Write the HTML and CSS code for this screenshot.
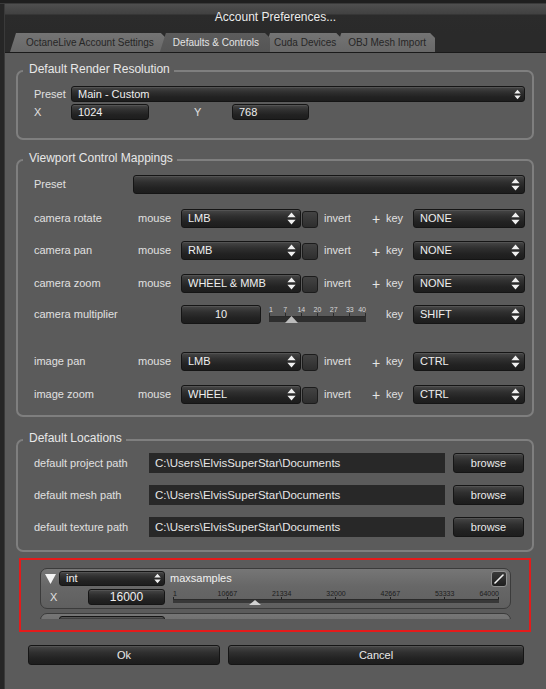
FILE: index.html
```html
<!DOCTYPE html>
<html>
<head>
<meta charset="utf-8">
<title>Account Preferences</title>
<link rel="stylesheet" href="styles.css">
</head>
<body>
<div class="screen">
  <div class="topstrip"></div>
  <div class="dialog">
    <div class="titlebar"><span class="title">Account Preferences...</span></div>
    <div class="tabbar">
      <div class="tab t1">OctaneLive Account Settings</div>
      <div class="tab t2 active">Defaults &amp; Controls</div>
      <div class="tab t3">Cuda Devices</div>
      <div class="tab t4">OBJ Mesh Import</div>
    </div>
    <div class="panel">
      <fieldset class="group g1">
        <legend>Default Render Resolution</legend>
        <div class="res-row">
          <span class="lbl res-lbl">Preset</span>
          <div class="combo combo-sm res-combo"><span class="ctext">Main - Custom</span><svg class="arr-sm" width="7" height="11" viewBox="0 0 9 13"><path d="M4.5 0.5L8.6 5.3H0.4Z M0.4 7.7H8.6L4.5 12.5Z" fill="#f0f0f0"/></svg></div>
        </div>
        <div class="res-row">
          <span class="lbl res-lbl">X</span>
          <div class="field field-sm res-x">1024</div>
          <span class="lbl res-ylbl">Y</span>
          <div class="field field-sm res-y">768</div>
        </div>
      </fieldset>

      <fieldset class="group g2">
        <legend>Viewport Control Mappings</legend>
        <div class="vrows">
          <div class="vrow vpreset">
            <span class="lbl">Preset</span>
            <div class="combo"><span class="ctext"></span><svg width="9" height="13" viewBox="0 0 9 13"><path d="M4.5 0.5L8.6 5.3H0.4Z M0.4 7.7H8.6L4.5 12.5Z" fill="#f0f0f0"/></svg></div>
          </div>
          <div class="vrow vstd">
            <span class="lbl">camera rotate</span><span class="lbl">mouse</span>
            <div class="combo"><span class="ctext">LMB</span><svg width="9" height="13" viewBox="0 0 9 13"><path d="M4.5 0.5L8.6 5.3H0.4Z M0.4 7.7H8.6L4.5 12.5Z" fill="#f0f0f0"/></svg></div>
            <div class="chkcell"><span class="chk"></span></div>
            <span class="lbl inv">invert</span><span class="plus">+</span><span class="lbl">key</span>
            <div class="combo"><span class="ctext">NONE</span><svg width="9" height="13" viewBox="0 0 9 13"><path d="M4.5 0.5L8.6 5.3H0.4Z M0.4 7.7H8.6L4.5 12.5Z" fill="#f0f0f0"/></svg></div>
          </div>
          <div class="vrow vstd">
            <span class="lbl">camera pan</span><span class="lbl">mouse</span>
            <div class="combo"><span class="ctext">RMB</span><svg width="9" height="13" viewBox="0 0 9 13"><path d="M4.5 0.5L8.6 5.3H0.4Z M0.4 7.7H8.6L4.5 12.5Z" fill="#f0f0f0"/></svg></div>
            <div class="chkcell"><span class="chk"></span></div>
            <span class="lbl inv">invert</span><span class="plus">+</span><span class="lbl">key</span>
            <div class="combo"><span class="ctext">NONE</span><svg width="9" height="13" viewBox="0 0 9 13"><path d="M4.5 0.5L8.6 5.3H0.4Z M0.4 7.7H8.6L4.5 12.5Z" fill="#f0f0f0"/></svg></div>
          </div>
          <div class="vrow vstd">
            <span class="lbl">camera zoom</span><span class="lbl">mouse</span>
            <div class="combo"><span class="ctext">WHEEL &amp; MMB</span><svg width="9" height="13" viewBox="0 0 9 13"><path d="M4.5 0.5L8.6 5.3H0.4Z M0.4 7.7H8.6L4.5 12.5Z" fill="#f0f0f0"/></svg></div>
            <div class="chkcell"><span class="chk"></span></div>
            <span class="lbl inv">invert</span><span class="plus">+</span><span class="lbl">key</span>
            <div class="combo"><span class="ctext">NONE</span><svg width="9" height="13" viewBox="0 0 9 13"><path d="M4.5 0.5L8.6 5.3H0.4Z M0.4 7.7H8.6L4.5 12.5Z" fill="#f0f0f0"/></svg></div>
          </div>
          <div class="vrow vmult">
            <span class="lbl">camera multiplier</span>
            <div class="field center">10</div>
            <span></span>
            <div class="slider sl-cam">
              <div class="sl-labels"><span>1</span><span>7</span><span>14</span><span>20</span><span>27</span><span>33</span><span>40</span></div>
              <div class="sl-ticks"><i></i><i></i><i></i><i></i><i></i><i></i><i></i></div>
              <div class="sl-track"><svg class="thumb" style="left:23%" width="13" height="7" viewBox="0 0 13 7"><path d="M6.5 0L13 7H0Z" fill="#bcbcbc"/></svg></div>
            </div>
            <span></span>
            <span class="lbl">key</span>
            <div class="combo"><span class="ctext">SHIFT</span><svg width="9" height="13" viewBox="0 0 9 13"><path d="M4.5 0.5L8.6 5.3H0.4Z M0.4 7.7H8.6L4.5 12.5Z" fill="#f0f0f0"/></svg></div>
          </div>
          <div class="vrow vstd spaced">
            <span class="lbl">image pan</span><span class="lbl">mouse</span>
            <div class="combo"><span class="ctext">LMB</span><svg width="9" height="13" viewBox="0 0 9 13"><path d="M4.5 0.5L8.6 5.3H0.4Z M0.4 7.7H8.6L4.5 12.5Z" fill="#f0f0f0"/></svg></div>
            <div class="chkcell"><span class="chk"></span></div>
            <span class="lbl inv">invert</span><span class="plus">+</span><span class="lbl">key</span>
            <div class="combo"><span class="ctext">CTRL</span><svg width="9" height="13" viewBox="0 0 9 13"><path d="M4.5 0.5L8.6 5.3H0.4Z M0.4 7.7H8.6L4.5 12.5Z" fill="#f0f0f0"/></svg></div>
          </div>
          <div class="vrow vstd">
            <span class="lbl">image zoom</span><span class="lbl">mouse</span>
            <div class="combo"><span class="ctext">WHEEL</span><svg width="9" height="13" viewBox="0 0 9 13"><path d="M4.5 0.5L8.6 5.3H0.4Z M0.4 7.7H8.6L4.5 12.5Z" fill="#f0f0f0"/></svg></div>
            <div class="chkcell"><span class="chk"></span></div>
            <span class="lbl inv">invert</span><span class="plus">+</span><span class="lbl">key</span>
            <div class="combo"><span class="ctext">CTRL</span><svg width="9" height="13" viewBox="0 0 9 13"><path d="M4.5 0.5L8.6 5.3H0.4Z M0.4 7.7H8.6L4.5 12.5Z" fill="#f0f0f0"/></svg></div>
          </div>
        </div>
      </fieldset>

      <fieldset class="group g3">
        <legend>Default Locations</legend>
        <div class="locs">
          <div class="lrow"><span class="lbl loc-lbl">default project path</span><div class="path">C:\Users\ElvisSuperStar\Documents</div><div class="btn browse">browse</div></div>
          <div class="lrow"><span class="lbl loc-lbl">default mesh path</span><div class="path">C:\Users\ElvisSuperStar\Documents</div><div class="btn browse">browse</div></div>
          <div class="lrow"><span class="lbl loc-lbl">default texture path</span><div class="path">C:\Users\ElvisSuperStar\Documents</div><div class="btn browse">browse</div></div>
        </div>
      </fieldset>

      <div class="redbox">
        <div class="nodes">
          <div class="node">
            <div class="nrow">
              <svg class="collapse" width="11" height="10" viewBox="0 0 11 10"><path d="M0 0H11L5.5 10Z" fill="#f4f4f4"/></svg>
              <div class="combo combo-sm ncombo"><span class="ctext">int</span><svg width="7" height="11" viewBox="0 0 9 13"><path d="M4.5 0.5L8.6 5.3H0.4Z M0.4 7.7H8.6L4.5 12.5Z" fill="#f0f0f0"/></svg></div>
              <span class="lbl nname">maxsamples</span>
              <div class="editbtn"><svg width="10" height="10" viewBox="0 0 10 10"><path d="M1 9L9 1" stroke="#f4f4f4" stroke-width="1.6" stroke-linecap="round"/></svg></div>
            </div>
            <div class="nrow nrow2">
              <span class="lbl nx">X</span>
              <div class="field field-sm nfield center">16000</div>
              <div class="slider sl-node">
                <div class="sl-labels"><span>1</span><span>10667</span><span>21334</span><span>32000</span><span>42667</span><span>53333</span><span>64000</span></div>
                <div class="sl-ticks"><i></i><i></i><i></i><i></i><i></i><i></i><i></i></div>
                <div class="sl-track"><svg class="thumb" style="left:25%" width="12" height="5" viewBox="0 0 12 5"><path d="M6 0L12 5H0Z" fill="#d2d2d2"/></svg></div>
              </div>
            </div>
          </div>
          <div class="node">
            <div class="nrow">
              <svg class="collapse" width="11" height="10" viewBox="0 0 11 10"><path d="M0 0H11L5.5 10Z" fill="#f4f4f4"/></svg>
              <div class="combo combo-sm ncombo"><span class="ctext"></span></div>
            </div>
          </div>
        </div>
      </div>

      <div class="actions">
        <div class="btn ok">Ok</div>
        <div class="btn cancel">Cancel</div>
      </div>
    </div>
  </div>
</div>
</body>
</html>
```
FILE: styles.css
```css
* { box-sizing: border-box; }
html, body { margin: 0; padding: 0; }
body {
  width: 546px;
  height: 689px;
  overflow: hidden;
  background: #262626;
  font-family: "Liberation Sans", Arial, sans-serif;
  font-size: 11px;
  color: #e2e2e2;
}
.screen { display: flex; flex-direction: column; height: 689px; }
.topstrip { height: 4px; flex: none; background: #1f1f1f; border-bottom: 1px solid #3a3a3a; }
.dialog {
  flex: 1;
  min-height: 0;
  margin-left: 4px;
  border-left: 1px solid #3a3a3a;
  display: flex;
  flex-direction: column;
}
.titlebar {
  height: 29px;
  flex: none;
  text-align: center;
  padding-top: 6px;
  background: linear-gradient(#4f4f4f 0, #414141 10px, #2b2b2b 11px, #2a2a2a 100%);
}
.title { font-size: 12px; line-height: 14px; color: #ececec; }

.tabbar {
  height: 20px;
  flex: none;
  display: flex;
  padding-left: 5px;
  background: #2a2a2a;
  border-bottom: 1px solid #1a1a1a;
}
.tab {
  height: 19px;
  font-size: 10px;
  line-height: 20px;
  white-space: nowrap;
  margin-left: -6px;
  color: #262626;
  background: linear-gradient(#747474, #686868);
  clip-path: polygon(6px 0, calc(100% - 5px) 0, 100% 5px, 100% 100%, 0 100%);
}
.tab.t1 { margin-left: 0; padding: 0 12px 0 16px; }
.tab.t2 { padding: 0 11px 0 13px; }
.tab.t3 { padding: 0 5px 0 10px; }
.tab.t4 { padding: 0 9px 0 13px; }
.tab.active {
  position: relative;
  z-index: 1;
  color: #e4e4e4;
  background: linear-gradient(#5c5c5c, #555555);
}

.panel {
  flex: 1;
  min-height: 0;
  background: #5b5b5b;
  padding-top: 8.5px;
  display: flex;
  flex-direction: column;
}
.panel > * { flex: none; }

.group {
  margin: 0 12px 0 11px;
  border: 2px solid #7f7f7f;
  border-radius: 7px;
  min-width: 0;
}
.group legend {
  font-size: 12px;
  line-height: 14px;
  color: #e8e8e8;
  padding: 0 4px 5px 6px;
  margin-left: -11px;
}
.lbl { line-height: 19px; white-space: nowrap; color: #e0e0e0; }

.g1 { padding: 5.5px 7px 18px 16px; }
.g2 { margin-top: 10.5px; padding: 5px 7px 13px 16px; }
.g3 { margin-top: 13.5px; padding: 3.5px 7px 13px 16px; }

.res-row { display: flex; align-items: center; height: 16px; }
.res-row + .res-row { margin-top: 2px; }
.res-row .combo-sm, .res-row .field-sm { height: 16px; line-height: 14px; }
.res-lbl { width: 37px; line-height: 16px; }
.res-combo { flex: 1; }
.res-combo .ctext { line-height: 14px; }
.res-x { width: 78px; }
.res-ylbl { width: 83px; padding-left: 45px; line-height: 16px; }
.res-y { width: 77px; }

.combo {
  height: 19px;
  display: flex;
  align-items: center;
  padding: 0 4px 0 6px;
  border: 1px solid #151515;
  border-radius: 3px;
  color: #efefef;
  background: linear-gradient(#474747 0, #303030 35%, #222222 70%, #1d1d1d 100%);
  box-shadow: inset 0 1px 0 rgba(255,255,255,0.08);
  min-width: 0;
}
.combo-sm { height: 15px; padding-right: 3px; }
.ctext { flex: 1; white-space: nowrap; overflow: hidden; line-height: 17px; }
.combo-sm .ctext { line-height: 13px; }
.combo svg { flex: none; }

.field {
  height: 19px;
  line-height: 17px;
  padding-left: 6px;
  border: 1px solid #151515;
  border-radius: 3px;
  color: #efefef;
  background: linear-gradient(#474747 0, #303030 35%, #222222 70%, #1d1d1d 100%);
  box-shadow: inset 0 1px 0 rgba(255,255,255,0.08);
}
.field-sm { height: 15px; line-height: 13px; }
.field.center { text-align: center; padding-left: 0; }

.vrows { display: flex; flex-direction: column; gap: 13.5px; }
.vrow { height: 19px; display: grid; align-items: center; }
.vrow.spaced { margin-top: 13.5px; }
.vpreset { grid-template-columns: 99px 392px; }
.vstd { grid-template-columns: 104px 43px 120px 17px 54px 14px 27px 112px; }
.vmult { grid-template-columns: 147px 80px 8px 97px 20px 27px 112px; }
.chkcell { height: 19px; display: flex; align-items: flex-end; }
.chk {
  width: 16px;
  height: 17px;
  margin-left: 1px;
  border: 1px solid #1c1c1c;
  border-radius: 3px;
  background: linear-gradient(#434343, #2e2e2e);
}
.inv { padding-left: 6px; }
.plus { font-size: 14px; line-height: 19px; padding-top: 3px; color: #e6e6e6; }

.slider { display: flex; flex-direction: column; }
.sl-labels { display: flex; justify-content: space-between; height: 7px; font-size: 7px; line-height: 7px; }
.sl-labels span { width: 0; display: flex; justify-content: center; white-space: nowrap; }
.sl-labels span:first-child { justify-content: flex-start; }
.sl-labels span:last-child { justify-content: flex-end; }
.sl-ticks { display: flex; justify-content: space-between; height: 3px; }
.sl-ticks i { width: 1px; background: #2a2a2a; }
.sl-track { position: relative; }
.thumb { position: absolute; top: -1px; }
.sl-cam { height: 16px; color: #d6d6d6; }
.sl-cam .sl-track { height: 6px; border-top: 1px solid #2a2a2a; background: #2e2e2e; }
.sl-cam .thumb { margin-left: -6.5px; }

.locs { display: flex; flex-direction: column; gap: 12px; }
.lrow { display: flex; align-items: center; height: 20px; }
.loc-lbl { width: 115px; line-height: 20px; }
.path {
  width: 296px;
  height: 20px;
  line-height: 20px;
  padding-left: 6px;
  background: #282828;
  font-size: 11.5px;
  color: #e6e6e6;
  white-space: nowrap;
}
.btn {
  height: 20px;
  line-height: 18px;
  text-align: center;
  border: 1px solid #151515;
  border-radius: 3px;
  color: #eaeaea;
  background: linear-gradient(#474747 0, #303030 35%, #222222 70%, #1d1d1d 100%);
  box-shadow: inset 0 1px 0 rgba(255,255,255,0.08);
}
.browse { width: 71px; margin-left: 8px; }

.redbox {
  margin: 6px 15px 0 14px;
  height: 74px;
  border: 2px solid #e41b1b;
  padding: 8px 18px 0 19px;
}
.nodes { height: 51px; overflow: hidden; display: flex; flex-direction: column; gap: 4px; }
.node {
  height: 41px;
  flex: none;
  border: 1px solid #3b3b3b;
  border-radius: 7px;
  padding: 2px 3px 0 4px;
  background: linear-gradient(#767676 0, #676767 45%, #5f5f5f 100%);
}
.nrow { display: flex; align-items: center; height: 15px; }
.nrow2 { margin-top: 3px; height: 16px; align-items: flex-start; }
.collapse { flex: none; }
.ncombo { width: 106px; margin-left: 3px; }
.nname { flex: 1; margin-left: 5px; line-height: 15px; color: #f0f0f0; }
.editbtn {
  width: 16px;
  height: 16px;
  display: flex;
  align-items: center;
  justify-content: center;
  border: 1px solid #909090;
  border-radius: 3px;
  background: linear-gradient(#3a3a3a, #1e1e1e);
}
.nx { width: 43px; padding-left: 5px; line-height: 16px; }
.nfield { width: 77px; height: 16px; font-size: 12px; line-height: 14px; }
.sl-node { width: 326px; margin-left: 8px; color: #1c1c1c; padding-top: 1px; }
.sl-node .sl-ticks { height: 2px; }
.sl-node .sl-ticks i { background: #222; }
.sl-node .sl-track { height: 4px; border-top: 1px solid #2a2a2a; background: #383838; }
.sl-node .thumb { margin-left: -6px; top: -0.5px; }

.actions { display: flex; margin: 13px 22px 0 23px; gap: 8px; }
.ok { width: 192px; }
.cancel { flex: 1; }
```
